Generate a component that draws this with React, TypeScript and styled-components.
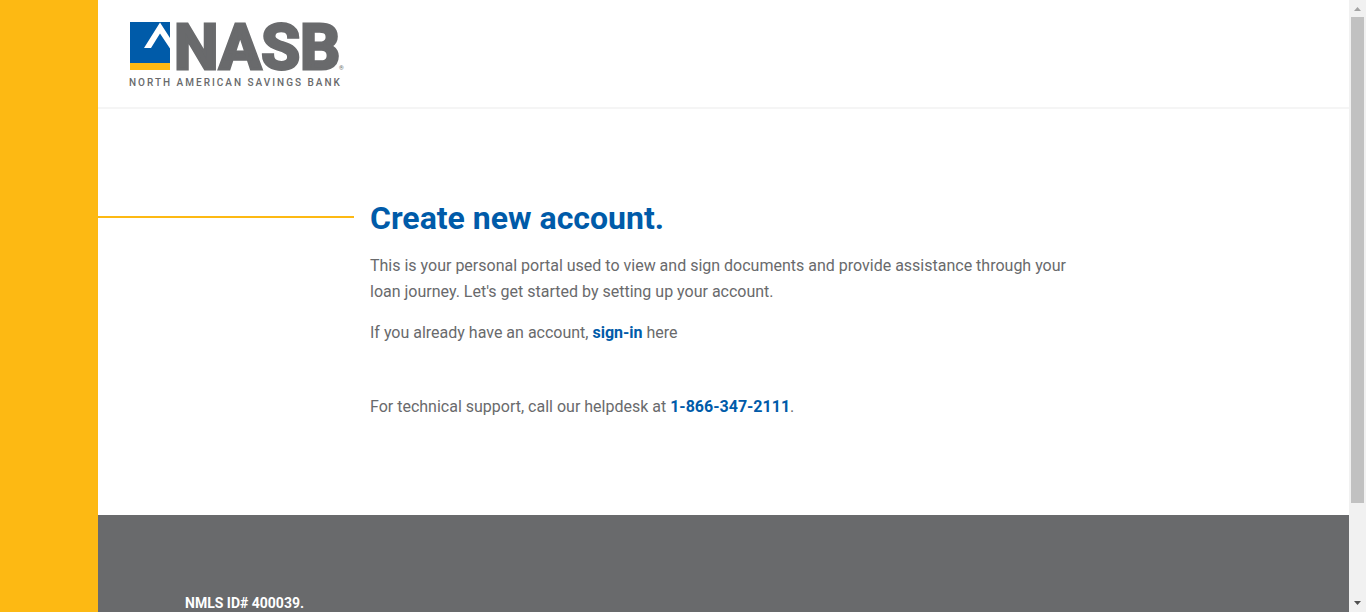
import React, { useRef } from "react";
import styled, { createGlobalStyle } from "styled-components";

const color = {
  gold: "#fdb913",
  blue: "#005ba9",
  grey: "#696a6c",
  rule: "#f5f5f5",
};

const GlobalStyle = createGlobalStyle`
  * { box-sizing: border-box; }
  body {
    margin: 0;
    background: #fff;
    color: ${color.grey};
    font-family: Roboto, "Liberation Sans", sans-serif;
    font-size: 16px;
    line-height: 26px;
  }
`;

const Shell = styled.div`
  display: flex;
  height: 100vh;
`;

const SideBand = styled.div`
  flex: 0 0 98px;
  background: ${color.gold};
`;

const Page = styled.div`
  flex: 1;
  min-width: 0;
  display: flex;
  flex-direction: column;
  overflow-y: auto;
  scrollbar-width: none;
`;

const Header = styled.header`
  flex: none;
  padding: 20px 31px 17px;
  border-bottom: 2px solid ${color.rule};
`;

const LogoLink = styled.a`
  display: block;
  width: 216px;
  height: 70px;
`;

const LogoSvg = styled.svg`
  display: block;
  overflow: visible;
`;

const Main = styled.main`
  flex: none;
  display: flex;
  gap: 16px;
  padding: 90px 16px 95px 0;
`;

const Accent = styled.div`
  flex: 0 0 256px;
  height: 2px;
  margin-top: 17px;
  background: ${color.gold};
`;

const Content = styled.section`
  flex: 0 1 704px;
`;

const Title = styled.h1`
  margin: 0 0 16px;
  color: ${color.blue};
  font-size: 32px;
  font-weight: 700;
  line-height: 38px;
`;

const Text = styled.p<{ $gap?: number }>`
  margin: 0 0 ${(p) => p.$gap ?? 0}px;
`;

const StrongLink = styled.a`
  color: ${color.blue};
  font-weight: 700;
  text-decoration: none;
`;

const Footer = styled.footer`
  flex: 1 0 213px;
  padding: 75px 87px;
  background: ${color.grey};
  color: #fff;
  font-size: 14px;
`;

const FooterTitle = styled.strong`
  font-weight: 700;
`;

const ScrollRail = styled.div`
  flex: 0 0 17px;
  display: flex;
  flex-direction: column;
  background: #f1f1f1;
`;

const ScrollButton = styled.button`
  flex: 0 0 17px;
  display: block;
  padding: 0;
  border: 0;
  background: transparent;
`;

const ScrollTrack = styled.div`
  flex: 1;
  padding: 0 2px;
`;

const ScrollThumb = styled.div`
  height: 84%;
  background: #c1c1c1;
`;

function Logo() {
  return (
    <LogoSvg width="216" height="70" viewBox="0 0 216 70" role="img" aria-label="NASB North American Savings Bank">
      <rect x="1" y="2" width="40" height="41" fill={color.blue} />
      <rect x="1" y="43" width="40" height="7" fill={color.gold} />
      <path d="M31 2.5 41 18V28.500L31 13.500 22 28H15Z" fill="#fff" />
      <g fill={color.grey} fontFamily="Roboto, sans-serif">
        <text x="45" y="49" fontSize="63" fontWeight="700" stroke={color.grey} strokeWidth="3">NASB</text>
        <text x="0" y="66" fontSize="10" fontWeight="500" letterSpacing="2">NORTH AMERICAN SAVINGS BANK</text>
        <text x="210" y="50" fontSize="6">®</text>
      </g>
    </LogoSvg>
  );
}

export default function App() {
  const page = useRef<HTMLDivElement>(null);
  const scroll = (top: number) => page.current?.scrollBy({ top });

  return (
    <>
      <GlobalStyle />
      <Shell>
        <SideBand />
        <Page ref={page}>
          <Header>
            <LogoLink href="#">
              <Logo />
            </LogoLink>
          </Header>
          <Main>
            <Accent />
            <Content>
              <Title>Create new account.</Title>
              <Text $gap={15}>
                This is your personal portal used to view and sign documents and provide assistance
                through your loan journey. Let's get started by setting up your account.
              </Text>
              <Text $gap={48}>
                If you already have an account, <StrongLink href="#sign-in">sign-in</StrongLink> here
              </Text>
              <Text>
                For technical support, call our helpdesk at{" "}
                <StrongLink href="tel:18663472111">1-866-347-2111</StrongLink>.
              </Text>
            </Content>
          </Main>
          <Footer>
            <FooterTitle>NMLS ID# 400039.</FooterTitle>
          </Footer>
        </Page>
        <ScrollRail>
          <ScrollButton aria-label="Scroll up" onClick={() => scroll(-40)}>
            <svg width="17" height="17" viewBox="0 0 17 17" display="block">
              <path d="M5 11 8.500 7 12 11Z" fill="#a3a3a3" />
            </svg>
          </ScrollButton>
          <ScrollTrack>
            <ScrollThumb />
          </ScrollTrack>
          <ScrollButton aria-label="Scroll down" onClick={() => scroll(40)}>
            <svg width="17" height="17" viewBox="0 0 17 17" display="block">
              <path d="M5 6 8.500 10 12 6Z" fill="#505050" />
            </svg>
          </ScrollButton>
        </ScrollRail>
      </Shell>
    </>
  );
}
